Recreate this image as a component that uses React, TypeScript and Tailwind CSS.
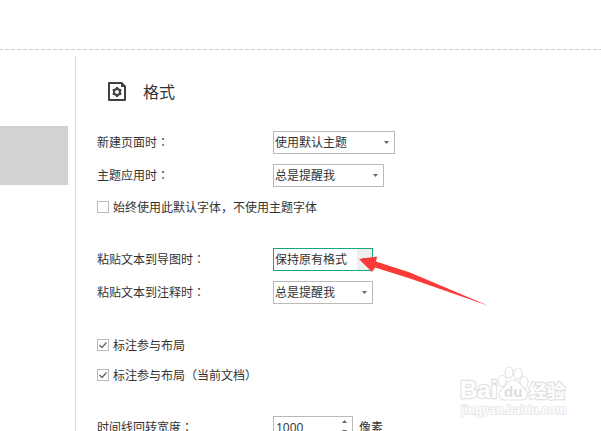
import type { ReactNode } from "react";

const Colon = () => <span className="font-['Noto_Sans_CJK_TC',sans-serif]">：</span>;

const Caret = () => (
  <svg viewBox="0 0 5 3" className="h-[3px] w-[5px] fill-[#666]" aria-hidden="true">
    <path d="M0 0h5L2.5 3z" />
  </svg>
);

function Field({ id, label, children }: { id: string; label: string; children: ReactNode }) {
  return (
    <div className="flex h-[23px] items-center">
      <label htmlFor={id} className="w-44 shrink-0 pb-px">
        {label}
        <Colon />
      </label>
      {children}
    </div>
  );
}

function Select({ id, value, width, active }: { id: string; value: string; width: string; active?: boolean }) {
  return (
    <div className={`relative h-full ${width}`}>
      <select
        id={id}
        className={`h-full w-full appearance-none border bg-white pr-4 pb-px pl-px outline-none ${active ? "border-[#1aa67c]" : "border-[#b9b9b9]"}`}
      >
        <option>{value}</option>
      </select>
      <span
        className={`pointer-events-none absolute inset-y-px right-px flex w-[15px] items-center justify-center ${active ? "bg-[#efefef]" : ""}`}
      >
        <Caret />
      </span>
    </div>
  );
}

function Check({ label, checked }: { label: string; checked?: boolean }) {
  return (
    <label className="flex h-5 items-center gap-1">
      <span className="relative h-3 w-3">
        <input
          type="checkbox"
          defaultChecked={checked}
          className="peer block h-3 w-3 appearance-none border border-[#b9b9b9] bg-white"
        />
        <svg
          viewBox="0 0 12 12"
          className="pointer-events-none absolute inset-0 hidden h-3 w-3 fill-none stroke-[#666] peer-checked:block"
          aria-hidden="true"
        >
          <path d="M2.5 6L5 8.5L9.5 3.5" strokeWidth="1.3" />
        </svg>
      </span>
      {label}
    </label>
  );
}

function FormatIcon() {
  return (
    <svg viewBox="0 0 18 19" className="h-[19px] w-[18px] fill-none stroke-[#404044]" aria-hidden="true">
      <path d="M1 1H13.5L17 4.5V18H1Z" strokeWidth="2" strokeLinejoin="round" />
      <path d="M13 0L18 5H13Z" fill="#404044" stroke="none" />
      <circle cx="9" cy="10" r="3" strokeWidth="2" />
      <path
        d="M9 5v2M9 13v2M4.7 7.5l1.7 1M11.6 11.5l1.7 1M4.7 12.5l1.7-1M11.6 8.5l1.7-1"
        strokeWidth="2"
      />
    </svg>
  );
}

function Watermark() {
  return (
    <svg
      viewBox="0 0 120 65"
      className="pointer-events-none absolute right-[26px] bottom-[6px] h-[65px] w-[120px] fill-white stroke-[#e2e2e2]"
      aria-hidden="true"
    >
      <g
        strokeWidth="2.4"
        paintOrder="stroke"
        strokeLinejoin="round"
        fontFamily="'Liberation Sans', 'Noto Sans CJK SC', sans-serif"
        fontWeight="700"
      >
        <text x="5" y="38" fontSize="24">Bai</text>
        <text x="74" y="38" fontSize="18">经验</text>
        <text x="6" y="54" fontSize="12" strokeWidth="1.4">jingyan.baidu.com</text>
      </g>
      <g strokeWidth="1.2">
        <ellipse cx="47" cy="21" rx="4" ry="5.5" />
        <ellipse cx="54" cy="12.5" rx="4" ry="5.5" />
        <ellipse cx="63" cy="13.5" rx="4" ry="5.5" />
        <ellipse cx="69" cy="22" rx="4" ry="5.5" />
        <path d="M58 20C52 20 51 26 47 29C42 33 44 40 50 40H66C73 40 74 33 70 29C66 26 64 20 58 20Z" />
      </g>
      <text x="49" y="37" fontSize="15" fill="#dcdcdc" stroke="none" fontWeight="700" fontFamily="'Liberation Sans', sans-serif">
        du
      </text>
    </svg>
  );
}

export default function App() {
  return (
    <div className="relative flex h-screen flex-col overflow-hidden bg-white font-['Noto_Sans_CJK_SC',sans-serif] text-xs text-[#333]">
      <header className="h-[50px] shrink-0">
        <svg className="mt-[49px] block h-px w-full" aria-hidden="true">
          <line x1="-1" x2="100%" y1="0.5" y2="0.5" stroke="#cfcfcf" strokeDasharray="4 2" />
        </svg>
      </header>
      <div className="mt-1.5 flex min-h-0 flex-1">
        <aside className="w-[76px] shrink-0 border-r border-[#dadada] pt-[70px] pr-[7px]">
          <div className="h-[59px] bg-[#d2d2d2]" />
        </aside>
        <main className="min-w-0 flex-1 pt-[23px] pl-[21px]">
          <h1 className="mb-7 flex h-6 items-center gap-[17px] pl-[11px] text-base leading-6">
            <FormatIcon />
            格式
          </h1>
          <form className="flex flex-col gap-[31px]">
            <section className="flex flex-col gap-2.5">
              <Field id="page" label="新建页面时">
                <Select id="page" value="使用默认主题" width="w-[122px]" />
              </Field>
              <Field id="theme" label="主题应用时">
                <Select id="theme" value="总是提醒我" width="w-[111px]" />
              </Field>
              <Check label="始终使用此默认字体，不使用主题字体" />
            </section>
            <section className="flex flex-col gap-2.5">
              <Field id="map" label="粘贴文本到导图时">
                <Select id="map" value="保持原有格式" width="w-[100px]" active />
              </Field>
              <Field id="note" label="粘贴文本到注释时">
                <Select id="note" value="总是提醒我" width="w-[100px]" />
              </Field>
            </section>
            <section className="flex flex-col gap-2.5">
              <Check label="标注参与布局" checked />
              <Check label="标注参与布局（当前文档）" checked />
            </section>
            <Field id="width" label="时间线回转宽度">
              <div className="relative h-full w-20">
                <input
                  id="width"
                  type="text"
                  defaultValue="1000"
                  className="h-full w-full border border-[#b9b9b9] bg-white pl-0.5 font-['Open_Sans',sans-serif] text-xs outline-none"
                />
                <span className="absolute inset-y-0 right-1.5 flex flex-col items-center justify-center gap-[7px] pb-0.5">
                  <button type="button" aria-label="增加" className="rotate-180">
                    <Caret />
                  </button>
                  <button type="button" aria-label="减少">
                    <Caret />
                  </button>
                </span>
              </div>
              <span className="pb-px pl-1.5">像素</span>
            </Field>
          </form>
        </main>
      </div>
      <svg
        viewBox="0 0 130 52"
        className="pointer-events-none absolute top-[255px] left-[359px] h-[52px] w-[130px] fill-[#fb3b38]"
        aria-hidden="true"
      >
        <path d="M0 4L18 1.5L17 6.5L51 17.5L130 51L51 23.5L16 12.5L13 17Z" />
      </svg>
      <Watermark />
    </div>
  );
}
